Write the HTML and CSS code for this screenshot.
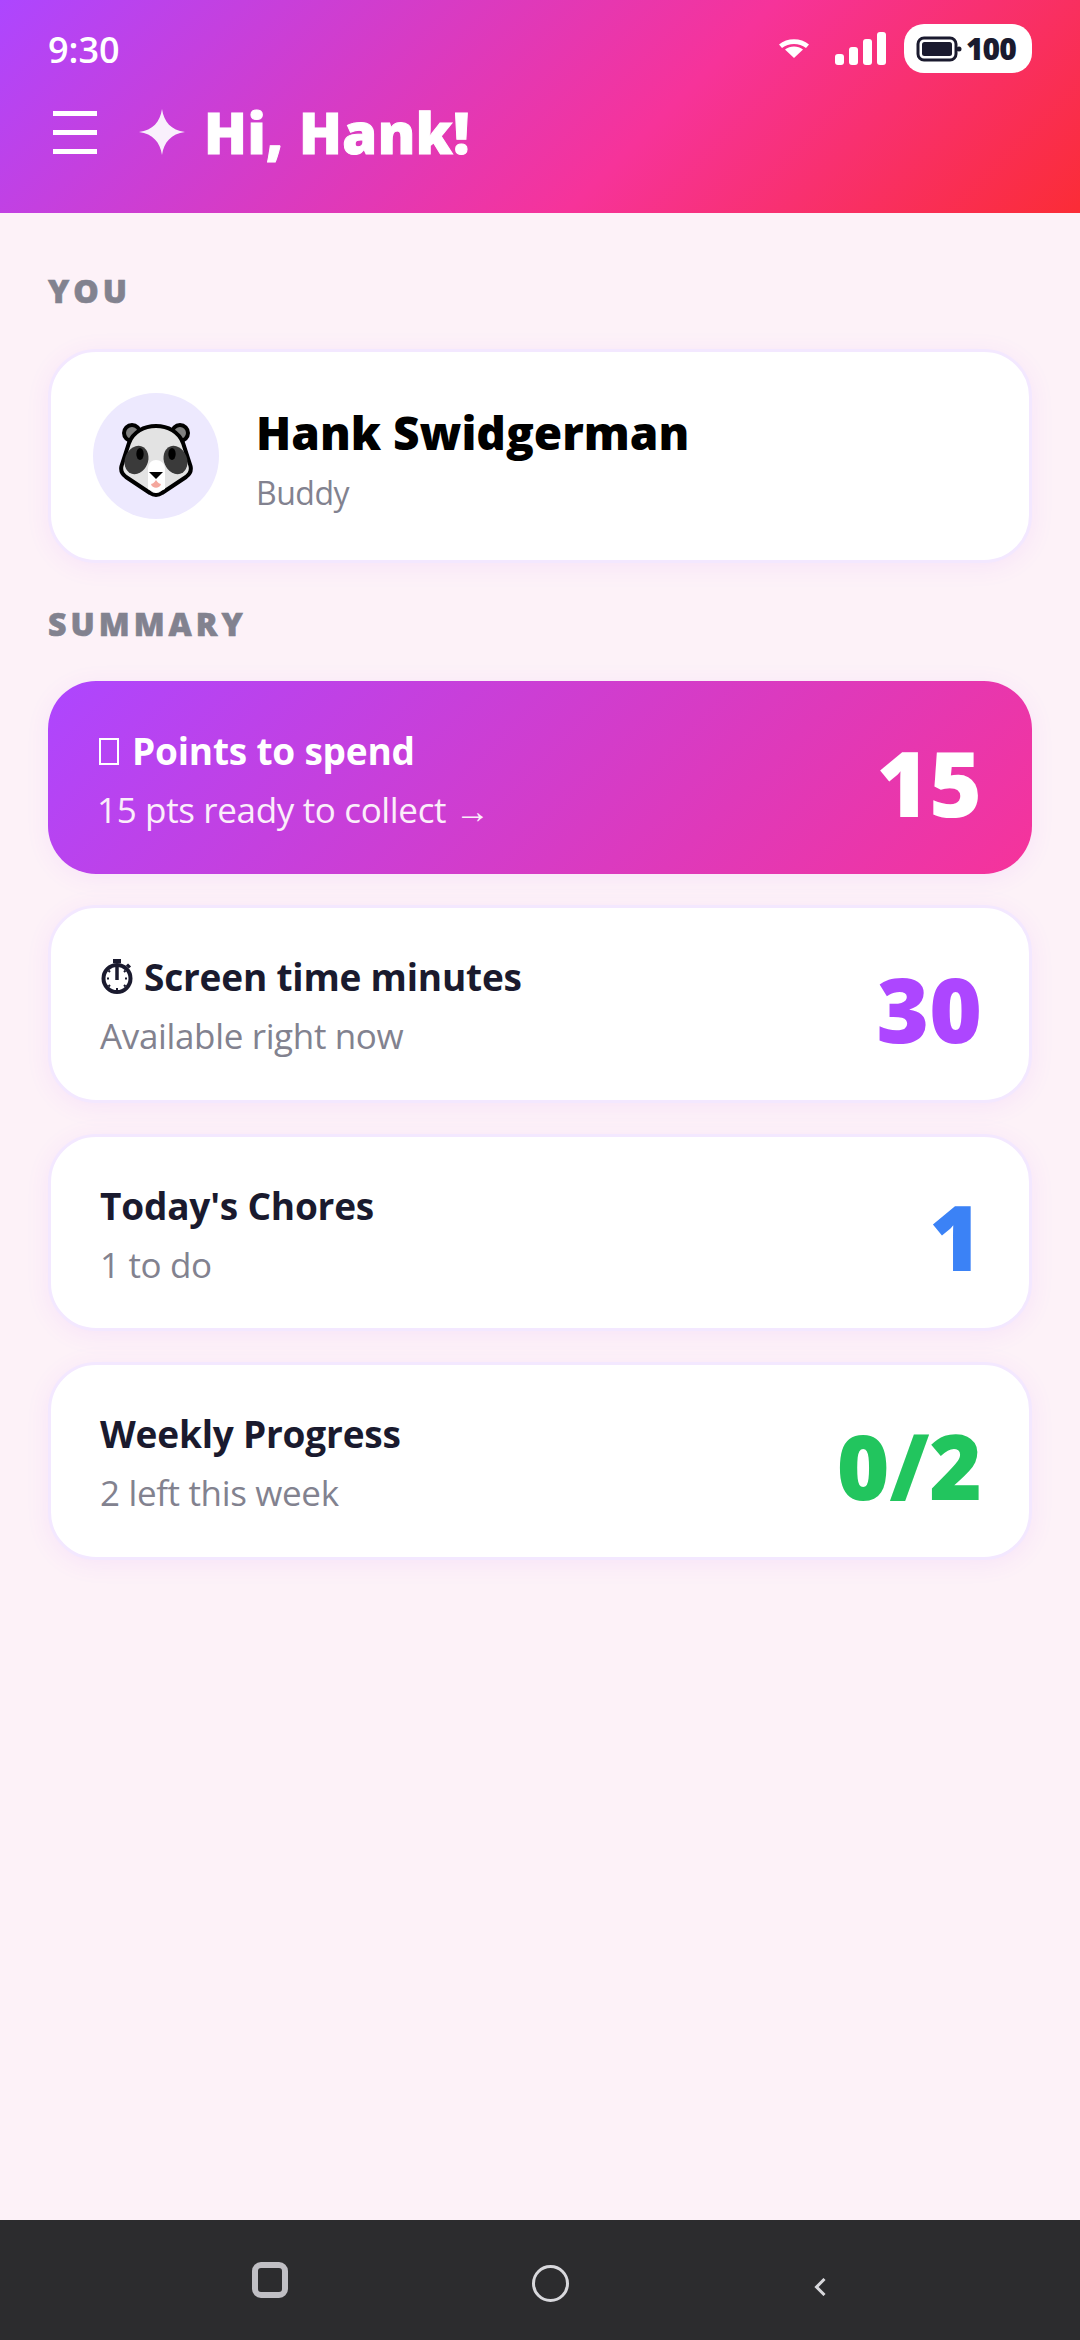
FILE: index.html
```html
<!DOCTYPE html>
<html lang="en">
<head>
  <meta charset="UTF-8" />
  <meta name="viewport" content="width=device-width, initial-scale=1.0"/>
  <title>Hi, Hank!</title>
  <link rel="stylesheet" href="styles.css">
</head>
<body>

  <!-- HEADER -->
  <header class="top">
    <div class="status">
      <span class="time">9:30</span>
      <div class="status-icons">
        <svg class="wifi" width="30" height="19" viewBox="0 0 30 19">
          <path d="M0 5.500C8-1.500 22-1.500 30 5.500L27 9C20 3.500 10 3.500 3 9Z" fill="#fff"/>
          <path d="M6 10.500C11 6.500 19 6.500 24 10.500L15 19Z" fill="#fff"/>
        </svg>
        <div class="bars">
          <span class="bar b1"></span>
          <span class="bar b2"></span>
          <span class="bar b3"></span>
          <span class="bar b4"></span>
        </div>
        <div class="battery">
          <svg width="46" height="26" viewBox="0 0 46 26">
            <rect x="2" y="2" width="38" height="22" rx="6" fill="none" stroke="#1a1a2e" stroke-width="3"/>
            <rect x="6" y="6" width="30" height="14" rx="2.500" fill="#1a1a2e"/>
            <circle cx="43" cy="13" r="2.500" fill="#1a1a2e"/>
          </svg>
          <span>100</span>
        </div>
      </div>
    </div>
    <div class="greeting">
      <div class="burger"><span></span><span></span><span></span></div>
      <svg class="sparkle" width="46" height="46" viewBox="0 0 46 46">
        <path d="M23 0C25 13 32 21 46 23C32 25 25 33 23 46C21 33 14 25 0 23C14 21 21 13 23 0Z" fill="#f9f0fc"/>
      </svg>
      <h1>Hi, Hank!</h1>
    </div>
  </header>

  <!-- MAIN -->
  <main class="content">
    <h2 class="label">YOU</h2>
    <div class="card profile">
      <div class="avatar">
        <svg class="panda" width="74" height="74" viewBox="0 0 74 74">
          <circle cx="13" cy="10" r="8" fill="#808080" stroke="#000" stroke-width="4"/>
          <circle cx="61" cy="10" r="8" fill="#808080" stroke="#000" stroke-width="4"/>
          <path d="M37 72C35 72 33 71.500 31 70L7 54C3 51 1.500 47 2.500 43L10 20C14 9 25 3 37 3C49 3 60 9 64 20L71.500 43C72.500 47 71 51 67 54L43 70C41 71.500 39 72 37 72Z" fill="#e3e3e3" stroke="#000" stroke-width="4"/>
          <path d="M29 66V46C29 40 33 37 37 37C41 37 46 40 46 46V66L37 70Z" fill="#fff"/>
          <ellipse cx="17.500" cy="37" rx="11.500" ry="14.500" fill="#3a3a3a" transform="rotate(22 17.500 37)"/>
          <ellipse cx="56.500" cy="37" rx="11.500" ry="14.500" fill="#3a3a3a" transform="rotate(-22 56.500 37)"/>
          <ellipse cx="21" cy="31" rx="3.700" ry="6" fill="#000"/>
          <ellipse cx="53" cy="31" rx="3.700" ry="6" fill="#000"/>
          <path d="M30 49H44L37 56Z" fill="#000"/>
          <path d="M37 57C35 60 33 61 32 61C33 66 41 66 42 61C41 61 39 60 37 57Z" fill="#f4a79d"/>
        </svg>
      </div>
      <div class="who">
        <div class="name">Hank Swidgerman</div>
        <div class="role">Buddy</div>
      </div>
    </div>

    <h2 class="label label-summary">SUMMARY</h2>
    <div class="stack">
      <div class="card stat stat-main">
        <div>
          <div class="stat-title"><span class="tofu"></span>Points to spend</div>
          <div class="stat-sub">15 pts ready to collect →</div>
        </div>
        <div class="stat-num">15</div>
      </div>

      <div class="card stat">
        <div>
          <div class="stat-title">
            <svg class="watch" width="34" height="36" viewBox="0 0 34 36">
              <rect x="13" y="0" width="8" height="4" fill="#1a1a2e"/>
              <path d="M27 5.500L30 8.500" stroke="#1a1a2e" stroke-width="3"/>
              <circle cx="17" cy="19.500" r="13.500" fill="none" stroke="#1a1a2e" stroke-width="4"/>
              <path d="M17 8V21" stroke="#1a1a2e" stroke-width="3.500"/>
              <path d="M9 19.500H7M27 19.500H25M17 29V31M10 13L8.500 11.500M24 26L25.500 27.500M10 26L8.500 27.500M24 13L25.500 11.500" stroke="#1a1a2e" stroke-width="2"/>
            </svg>Screen time minutes
          </div>
          <div class="stat-sub">Available right now</div>
        </div>
        <div class="stat-num num-purple">30</div>
      </div>

      <div class="card stat">
        <div>
          <div class="stat-title">Today's Chores</div>
          <div class="stat-sub">1 to do</div>
        </div>
        <div class="stat-num num-blue">1</div>
      </div>

      <div class="card stat">
        <div>
          <div class="stat-title">Weekly Progress</div>
          <div class="stat-sub">2 left this week</div>
        </div>
        <div class="stat-num num-green">0/2</div>
      </div>
    </div>
  </main>

  <!-- ANDROID NAV -->
  <footer class="sysnav">
    <span class="nav-square"></span>
    <span class="nav-circle"></span>
    <svg width="12" height="18" viewBox="0 0 12 18">
      <path d="M10.500 1L2.500 9L10.500 17" fill="none" stroke="#d8d8dc" stroke-width="3"/>
    </svg>
  </footer>

</body>
</html>
```

FILE: styles.css
```css
* {
  box-sizing: border-box;
}

html, body {
  height: 100%;
}

body {
  margin: 0;
  display: flex;
  flex-direction: column;
  font-family: "Open Sans", "Noto Sans", sans-serif;
  background-color: #fdf2f8;
  color: #1a1a2e;
}

/* ===== HEADER ===== */
.top {
  height: 213px;
  padding: 24px 48px 0;
  background: linear-gradient(135deg, #ad46ff 0%, #f6339a 60%, #fb2c36 100%);
  color: white;
}

.status {
  display: flex;
  justify-content: space-between;
  align-items: center;
  height: 49px;
}

.time {
  padding-top: 2px;
  font-size: 36px;
  font-weight: 600;
}

.status-icons {
  display: flex;
  align-items: center;
}

.wifi {
  margin-right: 26px;
}

.bars {
  display: flex;
  align-items: flex-end;
  gap: 5px;
  height: 33px;
  margin-right: 18px;
}

.bar {
  width: 9px;
  background-color: white;
  border-radius: 3px;
}

.b1 { height: 11px; }
.b2 { height: 18px; }
.b3 { height: 26px; }
.b4 { height: 33px; }

.battery {
  display: flex;
  align-items: center;
  gap: 4px;
  height: 49px;
  width: 128px;
  padding-left: 12px;
  background-color: white;
  border-radius: 20px;
  color: #1a1a2e;
  font-size: 30px;
  font-weight: 800;
  letter-spacing: -1px;
}

.greeting {
  display: flex;
  align-items: center;
  margin-top: 29px;
}

.burger {
  display: flex;
  flex-direction: column;
  gap: 14px;
  width: 44px;
  margin-left: 5px;
  margin-right: 42px;
}

.burger span {
  height: 5px;
  background-color: white;
}

.sparkle {
  margin-right: 19px;
}

h1 {
  margin: 0;
  font-size: 56px;
  line-height: 60px;
  font-weight: 800;
  letter-spacing: 0.500px;
  -webkit-text-stroke: 1px white;
}

/* ===== CONTENT ===== */
.content {
  flex: 1;
  padding: 0 48px;
}

.label {
  margin: 62px 0 0;
  height: 32px;
  font-size: 32px;
  line-height: 32px;
  font-weight: 800;
  letter-spacing: 4px;
  color: #82828f;
  -webkit-text-stroke: 0.600px #82828f;
}

.label-summary {
  margin-top: 45px;
  margin-bottom: 41px;
}

.card {
  background-color: white;
  border: 3px solid #f3e8ff;
  border-radius: 48px;
  box-shadow: 0 4px 24px rgba(173, 70, 255, 0.08);
}

.profile {
  display: flex;
  align-items: center;
  gap: 37px;
  height: 214px;
  margin-top: 42px;
  padding-left: 42px;
}

.avatar {
  display: flex;
  align-items: center;
  justify-content: center;
  width: 126px;
  height: 126px;
  border-radius: 50%;
  background-color: #ede9fe;
}

.panda {
  margin-top: 7px;
}

.who {
  padding-top: 4px;
}

.name {
  font-size: 46px;
  line-height: 60px;
  font-weight: 800;
  color: #000;
}

.role {
  margin-top: 9px;
  font-size: 32px;
  line-height: 44px;
  letter-spacing: -0.500px;
  color: #82828f;
}

.stack {
  display: flex;
  flex-direction: column;
  gap: 31px;
}

.stat {
  display: flex;
  justify-content: space-between;
  align-items: center;
  height: 197.500px;
  padding: 4px 47px 0 49px;
}

.stat-title {
  display: flex;
  align-items: center;
  font-size: 37px;
  line-height: 52px;
  font-weight: 700;
  letter-spacing: -0.200px;
}

.stat-sub {
  margin-top: 9px;
  font-size: 35px;
  line-height: 48px;
  letter-spacing: -0.350px;
  color: #82828f;
}

.stat-num {
  margin-top: 4px;
  font-size: 90px;
  line-height: 100px;
  font-weight: 800;
}

.stat-main {
  height: 193px;
  border: none;
  padding: 4px 50px 0 51px;
  background: linear-gradient(135deg, #ad46ff, #f6339a);
  color: white;
}

.stat-main .stat-sub {
  margin-left: -2px;
  color: #fbeefa;
}

.tofu {
  width: 20px;
  height: 27px;
  margin-right: 13px;
  border: 2px solid white;
}

.watch {
  margin-right: 10px;
}

.num-purple { color: #ad46ff; }
.num-blue { color: #3b82f6; }
.num-green { color: #22c55e; }

/* ===== SYSTEM NAV ===== */
.sysnav {
  display: flex;
  height: 120px;
  background-color: #2c2c2e;
  position: relative;
}

.nav-square,
.nav-circle,
.sysnav svg {
  position: absolute;
}

.nav-square {
  left: 252px;
  top: 42px;
  width: 36px;
  height: 36px;
  border: 6px solid #c0bfc4;
  border-radius: 9px;
}

.nav-circle {
  left: 532px;
  top: 45px;
  width: 37px;
  height: 37px;
  border: 3px solid #d8d8dc;
  border-radius: 50%;
}

.sysnav svg {
  left: 814px;
  top: 58px;
}
```
